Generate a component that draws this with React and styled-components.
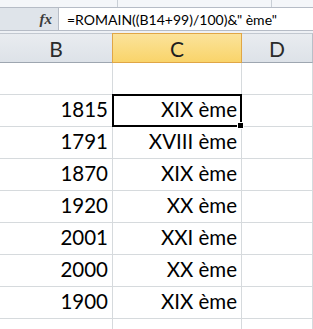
import React from 'react';
import styled, { createGlobalStyle } from 'styled-components';

const GlobalStyle = createGlobalStyle`
  html, body {
    margin: 0;
    padding: 0;
    background: #ffffff;
    overflow: hidden;
  }
`;

const Sheet = styled.div`
  width: 313px;
  height: 329px;
  overflow: hidden;
  font-family: Lato, 'Open Sans', sans-serif;
  background: #fff;
`;

const TopStrip = styled.div`
  height: 7px;
  background: #f4f6f9;
  display: flex;
`;

const StripPart = styled.div`
  width: ${(p) => p.width}px;
  border-right: 1px solid #c9cfd6;
`;

const FormulaBar = styled.div`
  height: 22px;
  display: flex;
  background: #dfe4ea;
  border-top: 1px solid #b6bcc6;
  border-bottom: 1px solid #b6bcc6;
`;

const FxBox = styled.div`
  width: 58px;
  display: flex;
  align-items: center;
  justify-content: flex-end;
  padding-right: 6px;
  box-sizing: border-box;
  font-family: 'Liberation Serif', serif;
  font-style: italic;
  font-weight: bold;
  font-size: 15px;
  color: #3c3c3c;
`;

const Input = styled.div`
  flex: 1;
  background: #fff;
  border-left: 1px solid #b6bcc6;
  display: flex;
  align-items: center;
  padding-left: 8px;
  font-family: Lato, sans-serif;
  font-size: 14px;
  color: #000;
  white-space: nowrap;
`;

const Spacer = styled.div`
  height: 2px;
  background: #eef1f5;
`;

const Grid = styled.div`
  display: grid;
  grid-template-columns: 113px 129px 1fr;
`;

const Head = styled.div`
  height: 30px;
  box-sizing: border-box;
  display: flex;
  align-items: center;
  justify-content: center;
  font-size: 21px;
  color: ${(p) => (p.active ? '#1e1e1e' : '#2b2b2b')};
  background: ${(p) => (p.active
    ? 'linear-gradient(#fbe39b, #f9d46a)'
    : 'linear-gradient(#e9ecf0, #dde2e8)')};
  border-top: 1px solid ${(p) => (p.active ? '#e0a646' : '#c2c8d0')};
  border-bottom: 1px solid ${(p) => (p.active ? '#e0a646' : '#9ea6b0')};
  border-right: 1px solid ${(p) => (p.active ? '#e0a646' : '#b8bfc8')};
  ${(p) => p.active && 'border-left: 1px solid #e0a646; margin-left: -1px;'}
`;

const Cell = styled.div`
  position: relative;
  height: 32px;
  box-sizing: border-box;
  border-right: 1px solid #d6dadd;
  border-bottom: 1px solid #d6dadd;
  display: flex;
  align-items: flex-end;
  justify-content: flex-end;
  padding: 0 4px 5px 0;
  font-size: 20.5px;
  color: #000;

  ${(p) => p.selected && `
    &::after {
      content: '';
      position: absolute;
      left: -1px;
      top: -1px;
      right: -1px;
      bottom: -1px;
      border: 2px solid #000;
    }
    &::before {
      content: '';
      position: absolute;
      right: -3px;
      bottom: -3px;
      width: 5px;
      height: 5px;
      background: #000;
      border: 1px solid #fff;
      z-index: 2;
    }
  `}
`;

const rows = [
  { year: '', label: '' },
  { year: '1815', label: 'XIX ème', selected: true },
  { year: '1791', label: 'XVIII ème' },
  { year: '1870', label: 'XIX ème' },
  { year: '1920', label: 'XX ème' },
  { year: '2001', label: 'XXI ème' },
  { year: '2000', label: 'XX ème' },
  { year: '1900', label: 'XIX ème' },
  { year: '', label: '' },
];

const App = () => (
  <Sheet>
    <GlobalStyle />
    <TopStrip>
      <StripPart width={117} />
      <StripPart width={153} />
    </TopStrip>
    <FormulaBar>
      <FxBox>fx</FxBox>
      <Input>=ROMAIN((B14+99)/100)&amp;&quot; ème&quot;</Input>
    </FormulaBar>
    <Spacer />
    <Grid>
      <Head>B</Head>
      <Head active>C</Head>
      <Head>D</Head>
      {rows.map((r, i) => (
        <React.Fragment key={i}>
          <Cell>{r.year}</Cell>
          <Cell selected={r.selected}>{r.label}</Cell>
          <Cell />
        </React.Fragment>
      ))}
    </Grid>
  </Sheet>
);

export default App;
